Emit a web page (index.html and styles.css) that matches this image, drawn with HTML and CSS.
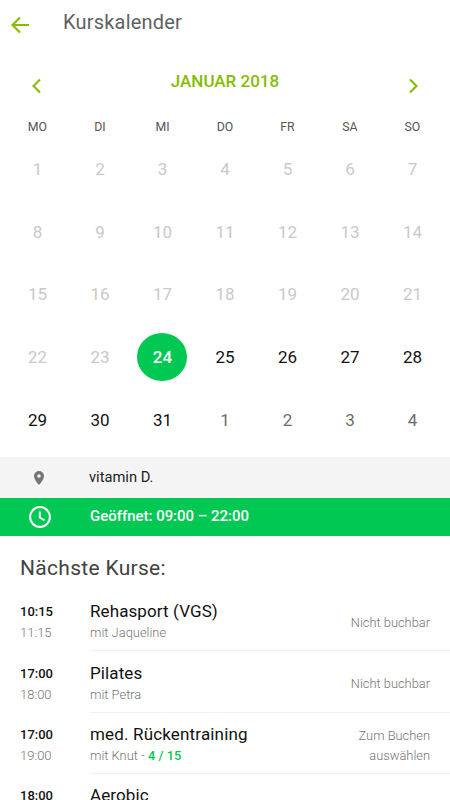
FILE: index.html
```html
<!DOCTYPE html>
<html lang="de">
<head>
<meta charset="utf-8">
<title>Kurskalender</title>
<link rel="stylesheet" href="styles.css">
</head>
<body>
<header class="topbar">
<svg class="back" viewBox="0 0 20 18"><path d="M19 9H2.500M10 1.500L2.500 9L10 16.500"/></svg>
<h1>Kurskalender</h1>
</header>
<nav class="month">
<svg viewBox="0 0 10 16"><path d="M9 1.500L2.500 8L9 14.500"/></svg>
<h2>JANUAR 2018</h2>
<svg viewBox="0 0 10 16"><path d="M1 1.500L7.500 8L1 14.500"/></svg>
</nav>
<section class="grid weekdays"><span>MO</span><span>DI</span><span>MI</span><span>DO</span><span>FR</span><span>SA</span><span>SO</span></section>
<section class="grid days">
<span>1</span><span>2</span><span>3</span><span>4</span><span>5</span><span>6</span><span>7</span>
<span>8</span><span>9</span><span>10</span><span>11</span><span>12</span><span>13</span><span>14</span>
<span>15</span><span>16</span><span>17</span><span>18</span><span>19</span><span>20</span><span>21</span>
<span>22</span><span>23</span><span class="selected">24</span><span class="on">25</span><span class="on">26</span><span class="on">27</span><span class="on">28</span>
<span class="on">29</span><span class="on">30</span><span class="on">31</span><span class="next">1</span><span class="next">2</span><span class="next">3</span><span class="next">4</span>
</section>
<div class="bar place">
<svg class="pin" viewBox="0 0 10 14"><path fill-rule="evenodd" d="M5 0A5 5 0 0 0 0 5C0 8.700 5 14 5 14S10 8.700 10 5A5 5 0 0 0 5 0ZM5 3.200A1.800 1.800 0 1 1 5 6.800A1.800 1.800 0 0 1 5 3.200Z"/></svg>
<span>vitamin D.</span>
</div>
<div class="bar open">
<svg class="clock" viewBox="0 0 22 22"><circle cx="11" cy="11" r="9.900"/><path d="M10.800 5.500V11.500L15.500 14.300"/></svg>
<span>Geöffnet: 09:00 – 22:00</span>
</div>
<h3>Nächste Kurse:</h3>
<main>
<article><div class="time"><b>10:15</b><span>11:15</span></div><div class="course"><div><h4>Rehasport (VGS)</h4><p>mit Jaqueline</p></div><aside>Nicht buchbar</aside></div></article>
<article><div class="time"><b>17:00</b><span>18:00</span></div><div class="course"><div><h4>Pilates</h4><p>mit Petra</p></div><aside>Nicht buchbar</aside></div></article>
<article><div class="time"><b>17:00</b><span>19:00</span></div><div class="course"><div><h4 class="wide">med. Rückentraining</h4><p>mit Knut - <strong>4 / 15</strong></p></div><aside>Zum Buchen<br>auswählen</aside></div></article>
<article><div class="time"><b>18:00</b></div><div class="course"><div><h4>Aerobic</h4></div></div></article>
</main>
</body>
</html>
```
FILE: styles.css
```css
* { box-sizing: border-box; }
body { margin: 0; height: 800px; overflow: hidden; background: #fff; font-family: Roboto, sans-serif; color: #212121; }
h1, h2, h3, h4, p { margin: 0; font-weight: 400; }
svg { fill: none; stroke: #84bd00; stroke-width: 2.1; flex: none; }
.topbar { height: 50px; display: flex; align-items: flex-start; padding: 10px 11px 0 10px; }
.back { width: 20px; height: 18px; margin-top: 6px; }
h1 { font-size: 20px; line-height: 24px; margin-left: 33px; letter-spacing: 0.2px; color: #616161; }
.month { height: 62px; padding: 19px 31px 0; display: flex; justify-content: space-between; align-items: flex-start; }
.month svg { width: 10px; height: 16px; margin-top: 9px; }
h2 { font-size: 17px; line-height: 24px; font-weight: 500; color: #84bd00; }
.grid { display: grid; grid-template-columns: repeat(7, 62.5px); padding-left: 6.200px; margin-right: -10px; text-align: center; }
.weekdays { height: 30px; line-height: 30px; font-size: 12.300px; color: #555; }
.days { grid-template-rows: repeat(5, 62.7px); height: 315px; margin-top: -4px; font-size: 17px; line-height: 62.7px; color: #c9c9c9; }
.days .on { color: #111; }
.days .next { color: #6c6c6c; }
.days .selected { width: 50px; height: 48px; line-height: 49px; place-self: center; border-radius: 50%; background: #00c853; color: #fff; font-weight: 500; }
.bar { display: flex; align-items: center; font-size: 15px; }
.bar span { margin-top: -2px; }
.place { height: 41px; margin-top: 4px; background: #f4f4f4; padding-left: 34px; font-size: 14.700px; }
.pin { width: 10px; height: 14px; fill: #757575; stroke: none; margin-right: 45px; }
.open { height: 38.400px; background: #00c853; color: #fff; font-weight: 500; font-size: 14.950px; padding-left: 29px; }
.bar.open span { margin-top: -2px; }
.clock { width: 22px; height: 22px; stroke: #fff; stroke-width: 2; margin-right: 39px; }
h3 { font-size: 21px; line-height: 30px; padding: 16.600px 20px 0; height: 53.400px; letter-spacing: 0.3px; color: #424242; }
article { display: flex; height: 61.4px; padding-left: 20px; }
.time { width: 70px; padding-top: 12.500px; font-size: 13px; line-height: 20px; color: #757575; font-weight: 300; }
.time b, .time span { display: block; }
.time span { margin-top: 1px; }
.time b { font-weight: 500; color: #111; }
.course { flex: 1; display: flex; justify-content: space-between; padding-right: 20px; border-bottom: 1px solid #f0f0f0; }
h4 { font-size: 17px; line-height: 22px; margin-top: 10.500px; letter-spacing: 0.1px; color: #111; }
.wide { letter-spacing: 0.16px; }
p { font-size: 12.900px; line-height: 20px; margin-top: 1px; color: #757575; font-weight: 300; }
strong { font-weight: 500; color: #00c853; }
aside { align-self: center; margin-top: 6.500px; text-align: right; font-size: 12.850px; line-height: 20.500px; color: #757575; font-weight: 300; }
```
